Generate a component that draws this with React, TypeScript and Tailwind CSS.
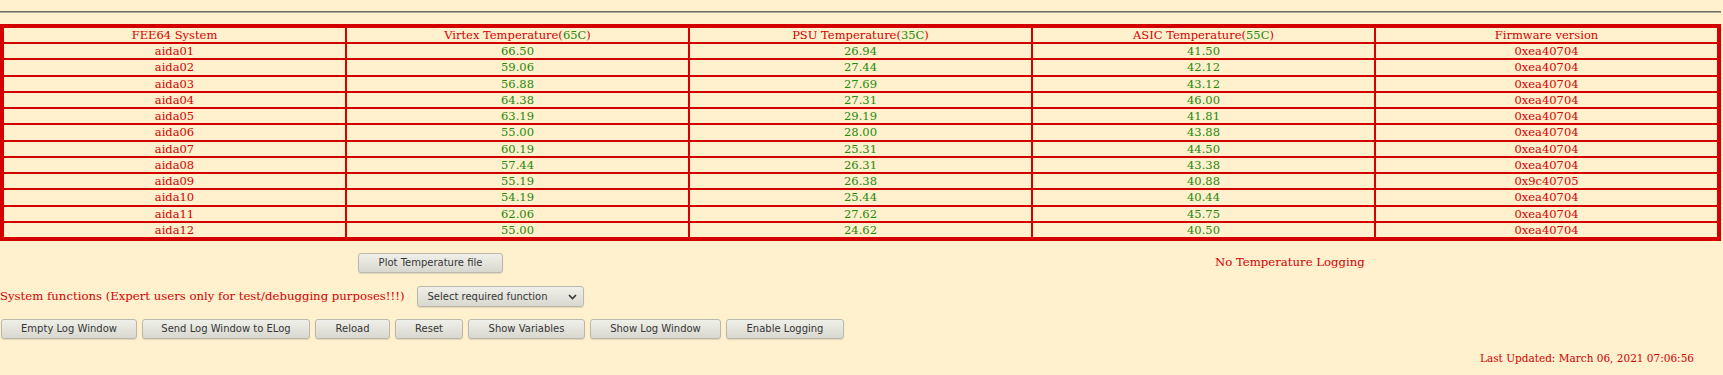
import React from "react";

type Row = [string, string, string, string, string];

const rows: Row[] = [
  ["aida01", "66.50", "26.94", "41.50", "0xea40704"],
  ["aida02", "59.06", "27.44", "42.12", "0xea40704"],
  ["aida03", "56.88", "27.69", "43.12", "0xea40704"],
  ["aida04", "64.38", "27.31", "46.00", "0xea40704"],
  ["aida05", "63.19", "29.19", "41.81", "0xea40704"],
  ["aida06", "55.00", "28.00", "43.88", "0xea40704"],
  ["aida07", "60.19", "25.31", "44.50", "0xea40704"],
  ["aida08", "57.44", "26.31", "43.38", "0xea40704"],
  ["aida09", "55.19", "26.38", "40.88", "0x9c40705"],
  ["aida10", "54.19", "25.44", "40.44", "0xea40704"],
  ["aida11", "62.06", "27.62", "45.75", "0xea40704"],
  ["aida12", "55.00", "24.62", "40.50", "0xea40704"],
];

const cell = "border border-[#d40000] p-0 text-center font-normal leading-[14.23px]";

function GtkButton({ label, width }: { label: string; width: string }) {
  return (
    <button
      className={`${width} h-[20px] shrink-0 rounded-[3px] border border-[#b9b9ae] bg-gradient-to-b from-[#f0f0ea] to-[#d8d8cf] text-center text-[10px] leading-[18px] text-[#363636] shadow-[0_1px_1px_rgba(0,0,0,0.12)] [font-family:'DejaVu_Sans',sans-serif]`}
    >
      {label}
    </button>
  );
}

export default function App() {
  return (
    <div className="min-h-[375px] w-full bg-[#fff0ce] pt-[11px] [font-family:'DejaVu_Serif',serif]">
      {/* rule */}
      <div className="h-0 w-[1721px] border-t border-b border-t-[#6e6e62] border-b-[#a9a99a]" />

      {/* fee64 table */}
      <table className="mt-[11px] w-[1721px] table-fixed border-separate border-spacing-0 border-[3px] border-[#d40000] text-[11.5px] text-[#d40000]">
        <thead>
          <tr>
            <th className={cell}>FEE64 System</th>
            <th className={cell}>
              Virtex Temperature(<span className="text-[#248a0c]">65C</span>)
            </th>
            <th className={cell}>
              PSU Temperature(<span className="text-[#248a0c]">35C</span>)
            </th>
            <th className={cell}>
              ASIC Temperature(<span className="text-[#248a0c]">55C</span>)
            </th>
            <th className={cell}>Firmware version</th>
          </tr>
        </thead>
        <tbody>
          {rows.map((r) => (
            <tr key={r[0]}>
              <td className={cell}>{r[0]}</td>
              <td className={`${cell} text-[#248a0c]`}>{r[1]}</td>
              <td className={`${cell} text-[#248a0c]`}>{r[2]}</td>
              <td className={`${cell} text-[#248a0c]`}>{r[3]}</td>
              <td className={cell}>{r[4]}</td>
            </tr>
          ))}
        </tbody>
      </table>

      {/* plot + logging status */}
      <div className="mt-[12px] flex h-[20px] w-[1721px] items-center">
        <div className="flex w-[861px] justify-center">
          <GtkButton label="Plot Temperature file" width="w-[145px]" />
        </div>
        <div className="pl-[354px] text-[11.7px] text-[#d40000]">No Temperature Logging</div>
      </div>

      {/* system functions */}
      <div className="mt-[13px] flex h-[21px] items-center">
        <span className="text-[11.7px] text-[#d40000]">
          System functions (Expert users only for test/debugging purposes!!!)
        </span>
        <div className="ml-[12px] flex h-[21px] w-[167px] items-center justify-between rounded-[3px] border border-[#b9b9ae] bg-gradient-to-b from-[#f0f0ea] to-[#d8d8cf] pl-[10px] pr-[6px] text-[10px] text-[#363636] shadow-[0_1px_1px_rgba(0,0,0,0.12)] [font-family:'DejaVu_Sans',sans-serif]">
          <span>Select required function</span>
          <svg width="9" height="6" viewBox="0 0 9 6" fill="none" stroke="#363636" strokeWidth="1.6">
            <path d="M1 1l3.5 3.5L8 1" />
          </svg>
        </div>
      </div>

      {/* action buttons */}
      <div className="mt-[12px] flex gap-[5px] pl-px">
        <GtkButton label="Empty Log Window" width="w-[136px]" />
        <GtkButton label="Send Log Window to ELog" width="w-[168px]" />
        <GtkButton label="Reload" width="w-[75px]" />
        <GtkButton label="Reset" width="w-[68px]" />
        <GtkButton label="Show Variables" width="w-[117px]" />
        <GtkButton label="Show Log Window" width="w-[131px]" />
        <GtkButton label="Enable Logging" width="w-[118px]" />
      </div>

      {/* last updated */}
      <div className="mt-[12px] w-[1694px] text-right text-[10.5px] leading-[15px] text-[#d40000]">
        Last Updated: March 06, 2021 07:06:56
      </div>
    </div>
  );
}
